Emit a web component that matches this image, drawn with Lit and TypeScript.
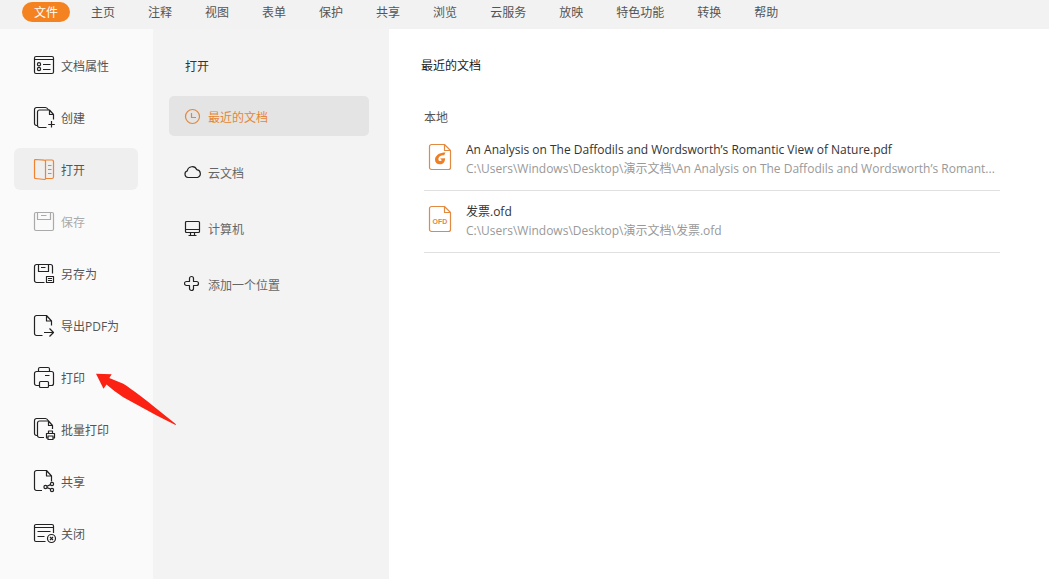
import { LitElement, html, svg, css } from "lit";
import { customElement, property, state } from "lit/decorators.js";
import { classMap } from "lit/directives/class-map.js";

const icons = {
  properties: svg`<rect x="1.5" y="3.5" width="19" height="17" rx="1.5"/><path d="M1.5 6.5H20.5M10 11.5H17.5M10 16.5H17.5"/><circle cx="6" cy="11.2" r="1.6"/><circle cx="6" cy="16" r="1.6"/>`,
  create: svg`<path d="M4.5 20.5H3.5a2 2 0 0 1-2-2V4.5a2 2 0 0 1 2-2H12.5q1.5 0 3 2.5"/><path d="M13.5 22.5H6.5a2 2 0 0 1-2-2V7a2 2 0 0 1 2-2H16.5L20.5 9.500V14.5M16.5 5V9.5H20.5M18.5 16V22.5M15.2 19.5H21.8"/>`,
  open: svg`<path d="M12.5 3H19a1.5 1.5 0 0 1 1.5 1.5V20A1.5 1.5 0 0 1 19 21.5H12.5M2.5 2.5L11.5 3.2a1 1 0 0 1 1 1V21.5a1 1 0 0 1-1 1L2.5 21.5a1 1 0 0 1-1-1V3.5a1 1 0 0 1 1-1ZM15 8.5H18.5M15 12.5H18.5M15 16.5H18.5"/>`,
  save: svg`<rect x="1.5" y="3.5" width="19" height="18" rx="1.5"/><path d="M4.5 3.5V10.5H17.5V3.5M8 6.5H13.5"/>`,
  saveAs: svg`<path d="M11.5 21.5H3.5a2 2 0 0 1-2-2V5.5a2 2 0 0 1 2-2H17.5a2 2 0 0 1 2 2V12.5M5.5 3.5V10.5H15.5V3.5M8 6.5H12.5M13.5 15.5H20.5V21.5H13.5ZM15 17.5H19M15 19.5H19"/>`,
  exportPdf: svg`<path d="M9.5 22.5H3.5a2 2 0 0 1-2-2V4.5a2 2 0 0 1 2-2H13.5L18.5 8V12.5M13.5 2.5V8H18.5M11 19.5H20.5M16.5 15.5L20.5 19.5L16.5 23.5"/>`,
  print: svg`<path d="M5.5 6.5V4a1.5 1.5 0 0 1 1.5-1.5H15A1.5 1.5 0 0 1 16.5 4V6.5M6.5 20.5H3.5a2 2 0 0 1-2-2V8.5a2 2 0 0 1 2-2H18.5a2 2 0 0 1 2 2V18.5a2 2 0 0 1-2 2H15.5M12 10.5H16.5"/><rect x="6.5" y="16.5" width="9" height="6" rx="1"/>`,
  batch: svg`<path d="M4.5 18.5H3.5a2 2 0 0 1-2-2V3.5a2 2 0 0 1 2-2H12.5q1.5 0 3 2.5"/><path d="M11 20.5H6.5a2 2 0 0 1-2-2V6a2 2 0 0 1 2-2H15.5L19.5 8.5V12M15.5 4V8.5H19.5M15.5 16V14H19.5V16M15 21H13.5V16.5H21.5V21H20"/><rect x="15" y="19" width="5" height="3.5"/>`,
  share: svg`<path d="M9 21.5H3.5a2 2 0 0 1-2-2V3.5a2 2 0 0 1 2-2H13.5L18.5 7V12.5M13.5 1.5V7H18.5M14 17.2L17.5 15.6M14 18.6L17.5 20"/><circle cx="12.5" cy="18" r="1.6"/><circle cx="19" cy="15" r="1.6"/><circle cx="19" cy="21" r="1.6"/>`,
  close: svg`<path d="M12.5 20.5H3a1.5 1.5 0 0 1-1.5-1.5V5A1.5 1.5 0 0 1 3 3.5H19A1.5 1.5 0 0 1 20.5 5V12M1.5 6.5H20.5M4.5 10.5H17.5M4.5 15.5H11.5"/><circle cx="18.5" cy="17.5" r="4"/><path d="M17 16L20 19M20 16L17 19"/>`,
  clock: svg`<circle cx="8.5" cy="9.5" r="7"/><path d="M7.5 6V10.5H12"/>`,
  cloud: svg`<path d="M4 14.5a3.4 3.4 0 0 1-.7-6.6A5 5 0 0 1 12.8 6.7A4 4 0 0 1 13.5 14.5Z"/>`,
  computer: svg`<rect x="1.5" y="2.5" width="14" height="11" rx="1"/><path d="M1.5 10.5H15.5M6.5 13.5V16.5M10.5 13.5V16.5M4.5 16.5H12.5"/>`,
  plus: svg`<path d="M5.5 6.5V3.5a2 2 0 0 1 4 0V6.5H12.5a2 2 0 0 1 0 4H9.5V13.5a2 2 0 0 1-4 0V10.5H2.5a2 2 0 0 1 0-4Z"/>`,
};

type IconName = keyof typeof icons;

const tabs = ["文件", "主页", "注释", "视图", "表单", "保护", "共享", "浏览", "云服务", "放映", "特色功能", "转换", "帮助"];

const commands: { label: string; icon: IconName; disabled?: boolean }[] = [
  { label: "文档属性", icon: "properties" },
  { label: "创建", icon: "create" },
  { label: "打开", icon: "open" },
  { label: "保存", icon: "save", disabled: true },
  { label: "另存为", icon: "saveAs" },
  { label: "导出PDF为", icon: "exportPdf" },
  { label: "打印", icon: "print" },
  { label: "批量打印", icon: "batch" },
  { label: "共享", icon: "share" },
  { label: "关闭", icon: "close" },
];

const places: { label: string; icon: IconName }[] = [
  { label: "最近的文档", icon: "clock" },
  { label: "云文档", icon: "cloud" },
  { label: "计算机", icon: "computer" },
  { label: "添加一个位置", icon: "plus" },
];

const files = [
  {
    name: "An Analysis on The Daffodils and Wordsworth’s Romantic View of Nature.pdf",
    path: "C:\\Users\\Windows\\Desktop\\演示文档\\An Analysis on The Daffodils and Wordsworth’s Romant...",
    kind: "pdf",
  },
  { name: "发票.ofd", path: "C:\\Users\\Windows\\Desktop\\演示文档\\发票.ofd", kind: "ofd" },
];

@customElement("line-icon")
class LineIcon extends LitElement {
  @property() name: IconName = "open";
  @property({ type: Number }) size = 24;

  static styles = css`
    :host { display: block; flex: none; }
    .glyph { display: block; fill: none; stroke: currentColor; stroke-width: 1.2; stroke-linejoin: round; }
  `;

  render() {
    return html`<svg class="glyph" width=${this.size} height=${this.size} viewBox="0 0 ${this.size} ${this.size}" aria-hidden="true">${icons[this.name]}</svg>`;
  }
}

@customElement("file-icon")
class FileIcon extends LitElement {
  @property() kind = "pdf";

  static styles = css`
    :host { display: block; flex: none; }
    .glyph { display: block; fill: none; stroke: #e08a42; stroke-width: 1.2; stroke-linejoin: round; }
    .mark { fill: #ee7f24; stroke: none; }
    .tag { fill: #e08a42; stroke: none; font: 700 7px "Liberation Sans", sans-serif; text-anchor: middle; }
  `;

  render() {
    return html`<svg class="glyph" width="24" height="28" viewBox="0 0 24 28" aria-hidden="true">
      <path d="M3.5 1.5H16.5L22.5 7.5V24.5a2 2 0 0 1-2 2H3.5a2 2 0 0 1-2-2V3.5a2 2 0 0 1 2-2ZM16.5 1.5V7.5H22.5"/>
      ${this.kind === "pdf"
        ? svg`<path class="mark" d="M17.5 9.5C12 9.5 7 12 7 16.8C7 20 9.5 21.6 12.2 21.3C15.5 21 17.3 18.5 17 15.2L12 15.6L13.8 17C13.2 18.6 10.4 18.6 10.4 16.2C10.5 13.2 13.5 12 16.2 12.2Z"/>`
        : svg`<text class="tag" x="12" y="19">OFD</text>`}
    </svg>`;
  }
}

@customElement("app-root")
class AppRoot extends LitElement {
  @state() private tab = "文件";
  @state() private command = "打开";
  @state() private place = "最近的文档";

  static styles = css`
    :host {
      display: flex;
      flex-direction: column;
      min-height: 100vh;
      background: #fff;
      color: #555;
      font: 12px/18px "Open Sans", "Noto Sans CJK SC", sans-serif;
    }
    * { box-sizing: border-box; }
    button { border: 0; background: none; color: inherit; font: inherit; text-align: left; white-space: nowrap; }
    h1, h2, h3, ul { margin: 0; padding: 0; font: inherit; list-style: none; }
    .tabs { display: flex; flex: none; gap: 9px; height: 29px; padding: 2px 22px 7px; background: #f2f2f2; }
    .tab { padding: 2px 12px 0; border-radius: 10px; line-height: 18px; }
    .tab.on { background: #f58220; color: #fff; }
    .body { display: flex; flex: 1; }
    .commands { position: relative; display: flex; flex-direction: column; gap: 10px; flex: none; padding: 15px 15px 15px 14px; background: #fafafa; }
    .command { display: flex; align-items: center; gap: 4px; width: 124px; height: 42px; padding: 0 0 0 19px; border-radius: 6px; }
    .command line-icon { color: #222; }
    .command.on { background: #efefef; }
    .command.on line-icon { color: #f08230; }
    .command:disabled, .command:disabled line-icon { color: #aaa; }
    .label { padding-top: 3px; }
    .pointer { position: absolute; left: 95px; top: 344px; pointer-events: none; }
    .places { display: flex; flex-direction: column; gap: 16px; flex: none; width: 236px; padding: 29px 20px 28px 16px; background: #f3f3f3; }
    .places-title { padding: 0 16px 4px; color: #333; }
    .place { display: flex; align-items: center; gap: 6px; height: 40px; padding: 0 15px; border-radius: 5px; color: #666; }
    .place line-icon { color: #222; }
    .place.on { background: #e4e4e4; }
    .place.on, .place.on line-icon { color: #e58637; }
    .recent { flex: 1; min-width: 0; padding: 28px 49px 28px 35px; }
    .recent-title { margin-left: -3px; color: #222; }
    .group { margin: 34px 0 2px; }
    .file { display: flex; align-items: flex-start; gap: 14px; height: 62px; padding: 11px 0 0 4px; border-bottom: 1px solid #e0e0e0; }
    .file file-icon { padding-top: 3px; }
    .text { flex: 1; min-width: 0; line-height: 19px; }
    .name, .path { display: block; overflow: hidden; text-overflow: ellipsis; white-space: nowrap; color: #999; }
    .name { color: #333; text-decoration: none; }
  `;

  render() {
    return html`
      <nav class="tabs">
        ${tabs.map((t) => html`<button class=${classMap({ tab: true, on: t === this.tab })} @click=${() => (this.tab = t)}>${t}</button>`)}
      </nav>
      <div class="body">
        <nav class="commands">
          ${commands.map(
            (c) => html`<button
              class=${classMap({ command: true, on: c.label === this.command })}
              ?disabled=${c.disabled ?? false}
              @click=${() => (this.command = c.label)}
            ><line-icon name=${c.icon}></line-icon><span class="label">${c.label}</span></button>`
          )}
          <svg class="pointer" width="82" height="54" viewBox="0 0 82 54" aria-hidden="true">
            <path fill="#fb2214" d="M1 .7L16.7 1.2L14.3 5L28.3 10.7Q34 14 51.7 27.7L81 51.2L80.500 52L61.700 42.500L28.300 24.300Q20 19 11.500 11.500L8.500 15.700Z"/>
          </svg>
        </nav>
        <section class="places">
          <h2 class="places-title">打开</h2>
          ${places.map(
            (p) => html`<button class=${classMap({ place: true, on: p.label === this.place })} @click=${() => (this.place = p.label)}>
              <line-icon name=${p.icon} size="18"></line-icon><span class="label">${p.label}</span>
            </button>`
          )}
        </section>
        <main class="recent">
          <h1 class="recent-title">最近的文档</h1>
          <h3 class="group">本地</h3>
          <ul>
            ${files.map(
              (f) => html`<li class="file">
                <file-icon kind=${f.kind}></file-icon>
                <div class="text"><a class="name" href="#">${f.name}</a><span class="path">${f.path}</span></div>
              </li>`
            )}
          </ul>
        </main>
      </div>
    `;
  }
}
